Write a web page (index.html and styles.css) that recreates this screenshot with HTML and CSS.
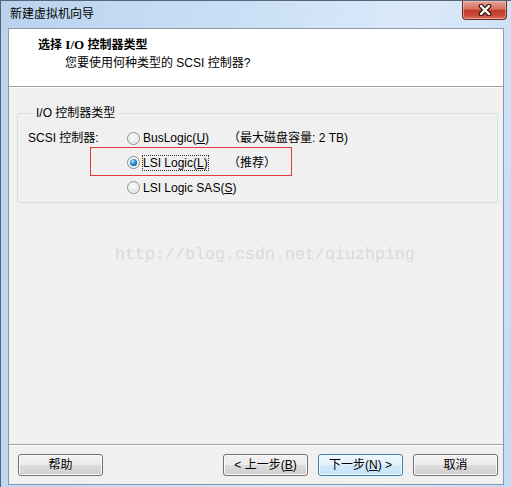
FILE: index.html
```html
<!DOCTYPE html>
<html lang="zh-CN">
<head>
<meta charset="utf-8">
<title>新建虚拟机向导</title>
<link rel="stylesheet" href="styles.css">
</head>
<body>
<div class="window">
  <div class="titlebar">
    <span class="title">新建虚拟机向导</span>
    <span class="close">
      <svg width="16" height="12" viewBox="0 0 16 12">
        <path d="M4 2 L12 10 M12 2 L4 10" stroke="#3b1a16" stroke-width="4.6" stroke-linecap="round"/>
        <path d="M4 2 L12 10 M12 2 L4 10" stroke="#ffffff" stroke-width="2.4" stroke-linecap="round"/>
      </svg>
    </span>
  </div>
  <div class="client">
    <div class="header">
      <div class="head-title">选择 <span class="serif">I/O</span> 控制器类型</div>
      <div class="head-sub">您要使用何种类型的 SCSI 控制器?</div>
    </div>
    <div class="body">
      <fieldset class="group">
        <legend>I/O 控制器类型</legend>
        <div class="grid">
          <span class="lbl">SCSI 控制器:</span>
          <span class="opt"><span class="radio"></span><span class="opt-text">BusLogic(<u>U</u>)</span></span>
          <span class="note">（最大磁盘容量: 2 TB)</span>

          <span class="lbl"></span>
          <span class="opt"><span class="radio checked"></span><span class="opt-text focus">LSI Logic(<u>L</u>)</span></span>
          <span class="note">（推荐）</span>

          <span class="lbl"></span>
          <span class="opt wide"><span class="radio"></span><span class="opt-text">LSI Logic SAS(<u>S</u>)</span></span>
        </div>
      </fieldset>
      <div class="watermark">http://blog.csdn.net/qiuzhping</div>
    </div>
    <div class="footer">
      <button class="btn help">帮助</button>
      <button class="btn">&lt; 上一步(<u>B</u>)</button>
      <button class="btn default">下一步(<u>N</u>) &gt;</button>
      <button class="btn">取消</button>
    </div>
    <div class="mark"></div>
  </div>
</div>
</body>
</html>
```

FILE: styles.css
```css
html, body {
  margin: 0;
  padding: 0;
  width: 511px;
  height: 487px;
  overflow: hidden;
}

body {
  font-family: "Liberation Sans", "Noto Sans CJK SC", sans-serif;
  font-size: 12px;
  line-height: 16px;
  color: #000;
}

.window {
  box-sizing: border-box;
  width: 511px;
  height: 487px;
  display: flex;
  flex-direction: column;
  border-left: 1px solid #55657a;
  border-top: 1px solid #55657a;
  background: linear-gradient(100deg, #b9d3ef 0%, #c9dff5 40%, #dbeafa 70%, #c4dbf3 100%);
}

.titlebar {
  height: 27px;
  display: flex;
  align-items: flex-start;
  flex: none;
}

.title {
  padding: 5px 0 0 9px;
  line-height: 16px;
}

.close {
  margin-left: auto;
  margin-right: 4px;
  width: 45px;
  height: 19px;
  box-sizing: border-box;
  border: 1px solid #6b2a22;
  border-top: none;
  border-radius: 0 0 4px 4px;
  background: linear-gradient(#e3a296 0%, #d56f61 45%, #c23a28 52%, #c84a37 80%, #d87a62 100%);
  box-shadow: inset 0 0 0 1px rgba(255, 220, 210, 0.45);
  display: flex;
  align-items: center;
  justify-content: center;
}

.close svg {
  display: block;
}

.client {
  position: relative;
  flex: 1;
  margin: 0 7px 2px 7px;
  border: 1px solid #8c9aa8;
  background: #f0f0f0;
  display: flex;
  flex-direction: column;
}

.header {
  box-sizing: border-box;
  height: 58px;
  flex: none;
  background: #fff;
  border-bottom: 1px solid #a0a0a0;
  box-shadow: 0 1px 0 #fff;
  padding: 8px 0 0 29px;
}

.head-title {
  font-weight: bold;
  line-height: 16px;
}

.serif {
  font-family: "Liberation Serif", serif;
  font-size: 13px;
}

.head-sub {
  margin-left: 27px;
  margin-top: 1px;
  line-height: 18px;
}

.body {
  flex: 1;
  padding: 0 5px 0 8px;
}

.group {
  margin: 18px 0 0 0;
  padding: 5px 0 2px 10px;
  border: 1px solid #d5dfe5;
  border-radius: 3px;
  min-width: 0;
}

.group legend {
  margin-left: 5px;
  padding: 0 3px;
  line-height: 16px;
}

.grid {
  display: grid;
  grid-template-columns: 99px 101px 1fr;
  grid-template-rows: 24px 25px 25px;
  align-items: center;
}

.opt {
  display: flex;
  align-items: center;
  gap: 3px;
  white-space: nowrap;
}

.opt.wide {
  grid-column: span 2;
}

.radio {
  box-sizing: border-box;
  width: 13px;
  height: 13px;
  border-radius: 50%;
  border: 1px solid #8e8f8f;
  background: radial-gradient(circle at 45% 40%, #ffffff 0%, #ececec 45%, #cfcfcf 100%);
  box-shadow: inset 0 0 0 1px #f6f6f6;
  display: grid;
  place-items: center;
  flex: none;
}

.radio.checked::after {
  content: "";
  width: 7px;
  height: 7px;
  border-radius: 50%;
  background: radial-gradient(circle at 40% 35%, #b8ecff 0%, #3ba0e3 35%, #105ea6 70%, #0b3f78 100%);
}

.opt-text.focus {
  display: inline-block;
  line-height: 14px;
  outline: 1px dotted #333;
}

.note {
  white-space: nowrap;
}

.watermark {
  margin: 42px 0 0 98px;
  font-family: "Liberation Mono", monospace;
  font-size: 16.67px;
  line-height: 20px;
  color: #dadada;
}

.footer {
  flex: none;
  display: flex;
  gap: 10px;
  border-top: 1px solid #a0a0a0;
  box-shadow: inset 0 1px 0 #fff;
  padding: 9px 5px 8px 9px;
}

.btn {
  box-sizing: border-box;
  width: 85px;
  height: 22px;
  padding: 0;
  margin: 0;
  font-family: "Liberation Sans", "Noto Sans CJK SC", sans-serif;
  font-size: 12px;
  line-height: 16px;
  color: #000;
  border: 1px solid #707070;
  border-radius: 3px;
  background: linear-gradient(#f2f2f2 0%, #ebebeb 49%, #dddddd 50%, #cfcfcf 100%);
  box-shadow: inset 0 0 0 1px #fbfbfb;
}

.btn.help {
  margin-right: auto;
}

.btn.default {
  border-color: #3c7fb1;
  background: linear-gradient(#eef7fd 0%, #e3f2fc 49%, #d3ebfb 50%, #c5e3f7 100%);
  box-shadow: inset 0 0 0 1px #f4fbff;
}

.mark {
  position: absolute;
  left: 81px;
  top: 118px;
  width: 202px;
  height: 29px;
  box-sizing: border-box;
  border: 1px solid #e53935;
  pointer-events: none;
}
```
